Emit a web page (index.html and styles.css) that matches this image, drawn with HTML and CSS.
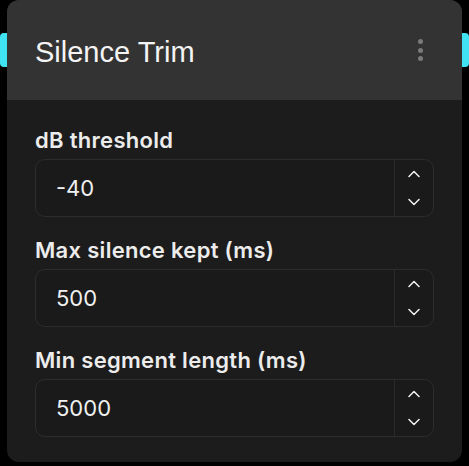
FILE: index.html
```html
<!DOCTYPE html>
<html lang="en">
<head>
    <meta charset="UTF-8">
    <meta name="viewport" content="width=device-width, initial-scale=1.0">
    <title>Silence Trim</title>
    <link rel="stylesheet" href="styles.css">
</head>
<body>
    <div class="canvas">
        <span class="handle handle-in"></span>
        <span class="handle handle-out"></span>

        <div class="node">
            <div class="node-header">
                <h2>Silence Trim</h2>
                <button class="menu-btn" aria-label="Menu">
                    <span></span><span></span><span></span>
                </button>
            </div>

            <form class="node-body">
                <div class="form-group">
                    <label for="threshold">dB threshold</label>
                    <div class="number-field">
                        <input type="number" id="threshold" name="threshold" value="-40">
                        <div class="stepper">
                            <button type="button" aria-label="Increase">
                                <svg width="12" height="8" viewBox="0 0 12 8"><path d="M1 6.5 L6 1.5 L11 6.5"/></svg>
                            </button>
                            <button type="button" aria-label="Decrease">
                                <svg width="12" height="8" viewBox="0 0 12 8"><path d="M1 1.5 L6 6.5 L11 1.5"/></svg>
                            </button>
                        </div>
                    </div>
                </div>

                <div class="form-group">
                    <label for="maxSilence">Max silence kept (ms)</label>
                    <div class="number-field">
                        <input type="number" id="maxSilence" name="maxSilence" value="500">
                        <div class="stepper">
                            <button type="button" aria-label="Increase">
                                <svg width="12" height="8" viewBox="0 0 12 8"><path d="M1 6.5 L6 1.5 L11 6.5"/></svg>
                            </button>
                            <button type="button" aria-label="Decrease">
                                <svg width="12" height="8" viewBox="0 0 12 8"><path d="M1 1.5 L6 6.5 L11 1.5"/></svg>
                            </button>
                        </div>
                    </div>
                </div>

                <div class="form-group">
                    <label for="minSegment">Min segment length (ms)</label>
                    <div class="number-field">
                        <input type="number" id="minSegment" name="minSegment" value="5000">
                        <div class="stepper">
                            <button type="button" aria-label="Increase">
                                <svg width="12" height="8" viewBox="0 0 12 8"><path d="M1 6.5 L6 1.5 L11 6.5"/></svg>
                            </button>
                            <button type="button" aria-label="Decrease">
                                <svg width="12" height="8" viewBox="0 0 12 8"><path d="M1 1.5 L6 6.5 L11 1.5"/></svg>
                            </button>
                        </div>
                    </div>
                </div>
            </form>
        </div>
    </div>
</body>
</html>
```

FILE: styles.css
```css
body {
    margin: 0;
    background: #000;
    font-family: 'Inter', 'Liberation Sans', sans-serif;
}

.canvas {
    position: relative;
    width: 469px;
    height: 466px;
}

/* connection handles peek out from behind the node */
.handle {
    position: absolute;
    top: 33px;
    width: 14px;
    height: 34px;
    background: #3fe3f2;
    border-radius: 4px;
}

.handle-in {
    left: 0;
}

.handle-out {
    right: 0;
}

.node {
    position: relative;
    margin-left: 7px;
    width: 455px;
    height: 462px;
    border-radius: 12px;
    overflow: hidden;
    background: #1c1c1c;
}

.node-header {
    height: 100px;
    display: flex;
    align-items: center;
    justify-content: space-between;
    padding: 4px 39px 0 28px;
    box-sizing: border-box;
    background: #333333;
}

h2 {
    margin: 0;
    font-family: 'Liberation Sans', Arial, sans-serif;
    font-weight: normal;
    font-size: 29px;
    color: #f4f4f4;
}

.menu-btn {
    display: flex;
    flex-direction: column;
    gap: 3.5px;
    margin-top: -4px;
    padding: 0;
    border: none;
    background: none;
}

.menu-btn span {
    width: 5px;
    height: 5px;
    border-radius: 50%;
    background: #7a7a7a;
}

.node-body {
    display: flex;
    flex-direction: column;
    gap: 21px;
    padding: 28px 28px 0;
}

.form-group label {
    display: block;
    margin-bottom: 7px;
    font-size: 22px;
    line-height: 24px;
    font-weight: 600;
    letter-spacing: 0.3px;
    color: #ececec;
}

.number-field {
    display: flex;
    height: 58px;
    border: 1px solid #2d2d2d;
    border-radius: 10px;
    box-sizing: border-box;
    background: #1a1a1a;
    overflow: hidden;
}

.number-field input {
    flex: 1;
    min-width: 0;
    padding: 0 0 0 20px;
    border: none;
    outline: none;
    background: transparent;
    font-family: 'Inter', sans-serif;
    font-size: 22px;
    color: #f0f0f0;
    -moz-appearance: textfield;
}

.number-field input::-webkit-inner-spin-button,
.number-field input::-webkit-outer-spin-button {
    -webkit-appearance: none;
    margin: 0;
}

.stepper {
    width: 38px;
    display: flex;
    flex-direction: column;
    justify-content: space-between;
    padding: 7px 0;
    border-left: 1px solid #2a2a2a;
}

.stepper button {
    display: flex;
    align-items: center;
    justify-content: center;
    height: 14px;
    padding: 0;
    border: none;
    background: none;
}

.stepper svg path {
    fill: none;
    stroke: #f2f2f2;
    stroke-width: 1.5;
    stroke-linecap: round;
    stroke-linejoin: round;
}
```
